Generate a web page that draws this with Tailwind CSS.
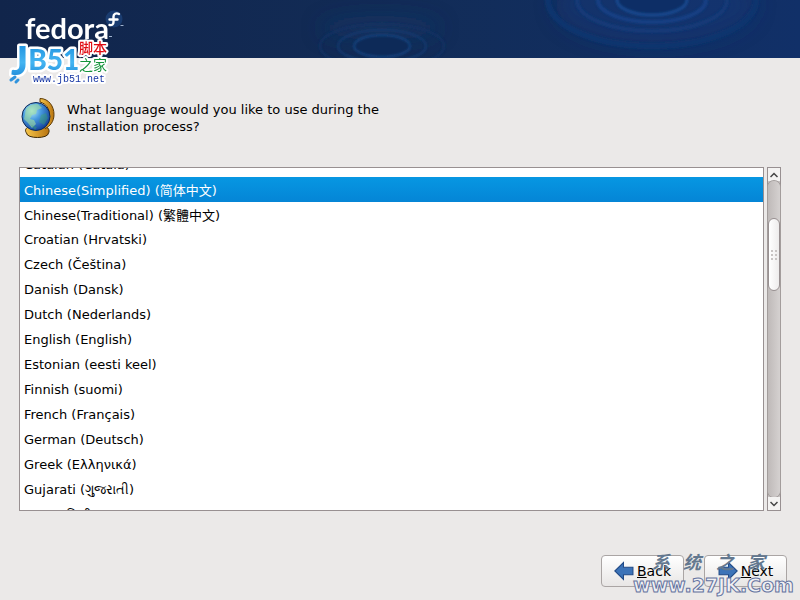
<!DOCTYPE html>
<html lang="en">
  <head>
    <meta charset="UTF-8" />
    <meta name="viewport" content="width=device-width, initial-scale=1.0" />
    <title>Fedora Installer</title>
    <script src="https://cdn.jsdelivr.net/npm/@tailwindcss/browser@4"></script>
  </head>
  <body class="relative flex h-screen flex-col overflow-hidden bg-[#ebe9e8] font-['DejaVu_Sans','Noto_Sans','Noto_Sans_CJK_SC',sans-serif] text-[13px] text-black">
    <!-- Banner -->
    <header class="relative h-[58px] shrink-0 overflow-hidden bg-linear-to-r from-[#11254b] via-[#122c57] via-50% to-[#113068]">
      <svg class="absolute right-0 top-0 h-[58px] w-[800px]" viewBox="0 0 800 58" fill="none" aria-hidden="true">
        <defs>
          <filter id="soft"><feGaussianBlur stdDeviation="1.2" /></filter>
          <filter id="softer" x="-50%" y="-50%" width="200%" height="200%"><feGaussianBlur stdDeviation="10" /></filter>
        </defs>
        <g filter="url(#softer)">
          <ellipse cx="380" cy="28" rx="60" ry="12" fill="#143a6a" opacity=".5" />
          <ellipse cx="655" cy="5" rx="100" ry="40" fill="#103a78" opacity=".5" />
        </g>
        <g filter="url(#soft)">
          <ellipse cx="382" cy="46" rx="28" ry="11" fill="#112b59" stroke="#17427d" stroke-width="2" />
          <ellipse cx="382" cy="46" rx="44" ry="16" stroke="#143a70" stroke-width="2" />
          <ellipse cx="382" cy="46" rx="62" ry="22" stroke="#133364" stroke-width="2" />
          <ellipse cx="652" cy="0" rx="35" ry="15" fill="#112f66" stroke="#17488e" stroke-width="3" />
          <ellipse cx="652" cy="0" rx="54" ry="22" stroke="#144184" stroke-width="4" />
          <ellipse cx="652" cy="0" rx="75" ry="31" stroke="#123a78" stroke-width="4" />
          <ellipse cx="652" cy="0" rx="104" ry="46" stroke="#11356e" stroke-width="6" />
        </g>
      </svg>
      <div class="relative pl-[25px] pt-[10px] font-['Lato',sans-serif] text-[29px] font-bold leading-[36px] text-white">fedora</div>
      <svg class="absolute left-[104px] top-[9px] h-[32px] w-[24px]" viewBox="0 0 24 32" aria-hidden="true">
        <circle cx="10" cy="10" r="8.500" fill="#1a3c70" />
        <path d="M15 5c-3-1.500-5.500 0-5.500 2.500V13c0 2.500-1.500 3.500-4 3M5.500 10.500h8" fill="none" stroke="#fff" stroke-width="2.400" stroke-linecap="round" />
        <path d="M16.500 16.500h3M5 27.500h3" stroke="#9fb2cf" />
      </svg>
    </header>

    <!-- Site badge -->
    <svg class="absolute left-[6px] top-[38px] h-[50px] w-[108px]" viewBox="0 0 108 50" role="img" aria-label="JB51 www.jb51.net">
      <defs>
        <linearGradient id="jb" x1="0" y1="0" x2="0" y2="1"><stop stop-color="#0d82d6" /><stop offset=".55" stop-color="#45b5f2" /><stop offset="1" stop-color="#0e78ce" /></linearGradient>
      </defs>
      <g stroke="#fff" stroke-width="5" stroke-linejoin="round" paint-order="stroke">
        <text x="5" y="37" font-family="Lato, sans-serif" font-size="40" font-weight="900" fill="url(#jb)">J<tspan font-size="28" dy="-5">B51</tspan></text>
        <path d="M5 42l4-3M10 44l2-2" stroke="#2f93dd" stroke-width="3" stroke-linecap="round" />
      </g>
      <g stroke="#fff" stroke-width="4" stroke-linejoin="round" paint-order="stroke">
        <text x="73" y="15" font-family="Noto Sans CJK SC, sans-serif" font-size="14" font-weight="500" fill="#e00b12">脚本</text>
        <text x="73" y="32" font-family="Noto Sans CJK SC, sans-serif" font-size="14" fill="#14943a">之家</text>
        <text x="27" y="44" font-family="Liberation Mono, monospace" font-size="10" fill="#1737a5">www.jb51.net</text>
      </g>
    </svg>

    <main class="flex min-h-0 flex-1 flex-col px-[19px] pt-[39px]">
      <div class="flex items-start">
        <svg class="h-[42px] w-[38px] shrink-0" viewBox="0 0 38 42" aria-hidden="true">
          <defs>
            <radialGradient id="sea" cx=".35" cy=".3" r=".8"><stop stop-color="#b6ecf6" /><stop offset=".4" stop-color="#489be0" /><stop offset="1" stop-color="#0b3390" /></radialGradient>
            <linearGradient id="brass"><stop stop-color="#f7c64a" /><stop offset="1" stop-color="#b87410" /></linearGradient>
          </defs>
          <path d="M9 30c-3 2-3 4-1.500 6 0 6 22 6 22 0 1.500-2 0-5-2-6z" fill="url(#brass)" stroke="#3f2a06" />
          <path d="M21 1.500c9 0 14 8 14 16 0 7-4 12-9 14l-2-2c8-4 10-21-3-24.500z" fill="url(#brass)" stroke="#5e3b05" />
          <circle cx="17" cy="19.500" r="14" fill="url(#sea)" stroke="#102b57" />
          <path d="M7 12c3-4 7-5 12-5l4 4-5 2-1 4-4 1-2 4 4 1 2 4-4 4-4-5-4-4z" fill="#a3dfa0" opacity=".6" />
          <path d="M22 18l5-2 2 5-4 7-5-3zM12 28l6 2-2 3z" fill="#3ba766" opacity=".4" />
        </svg>
        <label for="language" class="ml-[10px] mt-[4px] w-[340px] leading-[17px]">What language would you like to use during the installation process?</label>
      </div>

      <div class="mt-[28px] flex h-[344px] shrink-0 gap-[3px]">
        <select
          id="language"
          size="13"
          class="block h-full min-w-0 flex-1 appearance-none overflow-y-auto rounded-none border border-[#989091] bg-white p-0 outline-none [scrollbar-width:none] [&>option]:flex [&>option]:h-[25px] [&>option]:min-h-[25px] [&>option]:items-center [&>option]:px-[4px] [&>option]:py-0 [&>option:checked]:bg-linear-to-b [&>option:checked]:from-[#0797e2] [&>option:checked]:to-[#0585d6] [&>option:checked]:text-white"
        >
          <option>Catalan (Català)</option>
          <option selected>Chinese(Simplified) (简体中文)</option>
          <option>Chinese(Traditional) (繁體中文)</option>
          <option>Croatian (Hrvatski)</option>
          <option>Czech (Čeština)</option>
          <option>Danish (Dansk)</option>
          <option>Dutch (Nederlands)</option>
          <option>English (English)</option>
          <option>Estonian (eesti keel)</option>
          <option>Finnish (suomi)</option>
          <option>French (Français)</option>
          <option>German (Deutsch)</option>
          <option>Greek (Ελληνικά)</option>
          <option>Gujarati (ગુજરાતી)</option>
          <option>Hindi (हिन्दी)</option>
          <option>Hungarian (Magyar)</option>
        </select>
        <div class="flex w-[14px] shrink-0 flex-col border border-[#989091] bg-[#c9c5c4]">
          <button type="button" aria-label="Scroll up" onclick="scrollList(-25)" class="flex h-[13px] shrink-0 items-center justify-center bg-[#f4f3f2]">
            <svg class="h-[6px] w-[8px]" viewBox="0 0 8 6" fill="none" stroke="#444" stroke-width="1.500"><path d="M.5 5L4 1.500 7.500 5" /></svg>
          </button>
          <div class="flex min-h-0 flex-1 flex-col rounded-[6px] bg-linear-to-r from-[#bfbab9] to-[#d5d1d0] pt-[37px] ring-1 ring-[#a39d9c]">
            <div class="grid h-[73px] grid-cols-[2px_2px] content-center justify-center gap-[2px] rounded-[6px] border border-[#989091] bg-linear-to-r from-white to-[#eeecec]">
              <i class="size-[2px] bg-[#c8c4c3]"></i><i class="size-[2px] bg-[#c8c4c3]"></i>
              <i class="size-[2px] bg-[#c8c4c3]"></i><i class="size-[2px] bg-[#c8c4c3]"></i>
              <i class="size-[2px] bg-[#c8c4c3]"></i><i class="size-[2px] bg-[#c8c4c3]"></i>
            </div>
          </div>
          <button type="button" aria-label="Scroll down" onclick="scrollList(25)" class="flex h-[13px] shrink-0 items-center justify-center bg-[#f4f3f2]">
            <svg class="h-[6px] w-[8px]" viewBox="0 0 8 6" fill="none" stroke="#444" stroke-width="1.500"><path d="M.5 1L4 4.500 7.500 1" /></svg>
          </button>
        </div>
      </div>
    </main>

    <footer class="flex shrink-0 justify-end gap-[20px] pb-[13px] pr-[13px] text-[14px]">
      <button type="button" class="flex h-[32px] w-[83px] items-center justify-center gap-[3px] rounded-[4px] border border-[#aaa5a4] bg-linear-to-b from-white to-[#e8e6e5]">
        <svg class="h-[20px] w-[20px]" viewBox="0 0 19 18" aria-hidden="true"><path d="M.8 9L9 1v4.500h9v7H9V17z" fill="#3c73b8" stroke="#204a87" /></svg>
        <span><u>B</u>ack</span>
      </button>
      <button type="button" class="flex h-[32px] w-[83px] items-center justify-center gap-[3px] rounded-[4px] border border-[#aaa5a4] bg-linear-to-b from-white to-[#e8e6e5]">
        <svg class="h-[20px] w-[20px]" viewBox="0 0 19 18" aria-hidden="true"><path d="M18.200 9L10 1v4.500H1v7h9V17z" fill="#3c73b8" stroke="#204a87" /></svg>
        <span><u>N</u>ext</span>
      </button>
    </footer>

    <!-- Watermark -->
    <svg class="pointer-events-none absolute bottom-0 right-0 h-[52px] w-[172px]" viewBox="0 0 172 52" role="img" aria-label="系统之家 www.27JK.Com">
      <g font-family="Noto Sans CJK SC, sans-serif" font-size="18" font-weight="700" font-style="italic" fill="#63788f">
        <text x="24" y="21">系</text>
        <text x="55" y="21">统</text>
        <text x="88" y="21">之</text>
        <text x="119" y="21">家</text>
      </g>
      <text x="5" y="44" font-family="DejaVu Sans, sans-serif" font-size="19" font-weight="700" fill="#f0f0f3" stroke="#6473a0" stroke-width="1">www.27JK.Com</text>
    </svg>

    <script>
      const list = document.getElementById("language");
      list.scrollTop = 16;

      function scrollList(step) {
        list.scrollTop += step;
      }
    </script>
  </body>
</html>
